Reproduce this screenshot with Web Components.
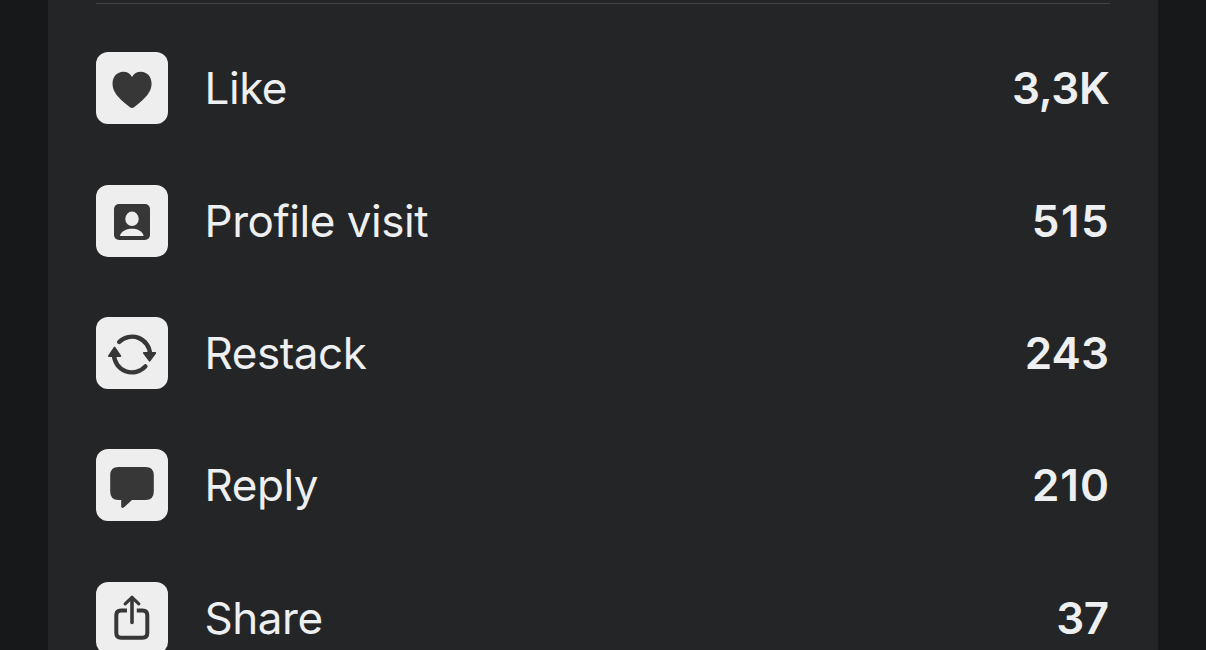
<!DOCTYPE html>
<html lang="en">
<head>
<meta charset="utf-8">
<title>Note stats</title>
<style>
  body {
    margin: 0;
    height: 650px;
    overflow: hidden;
    background: #17181a;
    font-family: Inter, "Liberation Sans", sans-serif;
  }
</style>
</head>
<body>
<stats-panel>
  <stat-row icon="heart" value="3,3K" tracking="-0.3" inset="0">Like</stat-row>
  <stat-row icon="profile" value="515" tracking="1.5" inset="1.2">Profile visit</stat-row>
  <stat-row icon="restack" value="243" tracking="0.1" inset="1">Restack</stat-row>
  <stat-row icon="reply" value="210" tracking="1" inset="1">Reply</stat-row>
  <stat-row icon="share" value="37" tracking="-0.5" inset="1">Share</stat-row>
</stats-panel>

<script>
const ICONS = {
  heart: `<path fill="var(--ink)" d="M36 56C34.8 56 32.8 54.2 30.2 52.2C23 46.4 16.5 40.2 16.5 31.8C16.5 24.6 21.2 19.7 27.2 19.7C31.2 19.7 34.2 21.6 36 25C37.8 21.6 40.9 19.7 45 19.7C51 19.7 55.6 24.6 55.6 31.8C55.6 40.2 49 46.4 41.8 52.2C39.2 54.2 37.2 56 36 56Z"/>`,
  profile: `
    <rect x="18" y="19" width="36" height="36" rx="5" fill="var(--ink)"/>
    <ellipse cx="36" cy="33.8" rx="6.7" ry="7.3" fill="var(--tile)"/>
    <path fill="var(--tile)" d="M24.8 51C23.8 51 24 50 24.5 49.2C26.6 45.6 30.8 43.7 36 43.7C41.2 43.7 45.2 45.6 47.1 49.2C47.6 50 47.7 51 46.7 51Z"/>`,
  restack: `
    <g fill="none" stroke="var(--ink)" stroke-width="4.4" stroke-linecap="round">
      <path d="M23.2 25A18 18 0 0 1 54 37"/>
      <path d="M18 37.5A18 18 0 0 0 49.4 49.4"/>
    </g>
    <g fill="var(--ink)" stroke="var(--ink)" stroke-width="1.8" stroke-linejoin="round">
      <path d="M47.8 36H59.3L53.6 43.8Z"/>
      <path d="M12.9 39H24.3L18.6 30.6Z"/>
    </g>`,
  reply: `<path fill="var(--ink)" d="M22.5 18H49.5Q57.8 18 57.8 26.3V42.8Q57.8 51 49.5 51H36L28 58.2Q25.2 60.2 25.2 57V51H22.5Q14.2 51 14.2 42.8V26.3Q14.2 18 22.5 18Z"/>`,
  share: `
    <g fill="none" stroke="var(--ink)" stroke-width="4" stroke-linecap="round" stroke-linejoin="round">
      <path stroke-linecap="butt" d="M31 28.4H25Q20.3 28.4 20.3 33.1V51Q20.3 55.7 25 55.7H46.6Q51.3 55.7 51.3 51V33.1Q51.3 28.4 46.6 28.4H40.8"/>
      <path stroke-width="3.6" d="M36 16V40.4"/>
      <path stroke-width="3.2" d="M29.2 21.8L36 15.3L42.8 21.8"/>
    </g>`
};

class StatIcon extends HTMLElement {
  connectedCallback() {
    const shadow = this.attachShadow({ mode: "open" });
    shadow.innerHTML = `
      <style>
        :host {
          --tile: #eeeeef;
          --ink: #373737;
          display: block;
          flex: none;
          width: 72px;
          height: 72px;
          border-radius: 12px;
          background: var(--tile);
        }
        svg { display: block; }
      </style>
      <svg width="72" height="72" viewBox="0 0 72 72">${ICONS[this.getAttribute("name")]}</svg>`;
  }
}

class StatRow extends HTMLElement {
  connectedCallback() {
    const tracking = this.getAttribute("tracking");
    const inset = this.getAttribute("inset");
    const shadow = this.attachShadow({ mode: "open" });
    shadow.innerHTML = `
      <style>
        :host {
          display: flex;
          align-items: center;
          height: 72px;
          color: #eeeff1;
          font-size: 44px;
          line-height: 72px;
          white-space: nowrap;
        }
        .label {
          flex: 1;
          margin-left: 36.5px;
          letter-spacing: -0.45px;
        }
        /* the last digit's tracking is taken off the margin, so the right edges line up */
        .value {
          margin-right: ${inset - tracking}px;
          font-weight: 560;
          letter-spacing: ${tracking}px;
        }
      </style>
      <stat-icon name="${this.getAttribute("icon")}"></stat-icon>
      <span class="label"><slot></slot></span>
      <span class="value">${this.getAttribute("value")}</span>`;
  }
}

class StatsPanel extends HTMLElement {
  constructor() {
    super();
    const shadow = this.attachShadow({ mode: "open" });
    shadow.innerHTML = `
      <style>
        :host {
          display: block;
          box-sizing: border-box;
          height: 650px;
          margin: 0 48px;
          padding: 3px 48px 0;
          overflow: hidden;
          background: #242527;
        }
        .line { height: 1px; background: #434446; }
        .rows {
          display: flex;
          flex-direction: column;
          gap: 60.4px;
          padding-top: 48.2px;
        }
      </style>
      <div class="line"></div>
      <div class="rows"><slot></slot></div>`;
  }
}

customElements.define("stat-icon", StatIcon);
customElements.define("stat-row", StatRow);
customElements.define("stats-panel", StatsPanel);
</script>
</body>
</html>
